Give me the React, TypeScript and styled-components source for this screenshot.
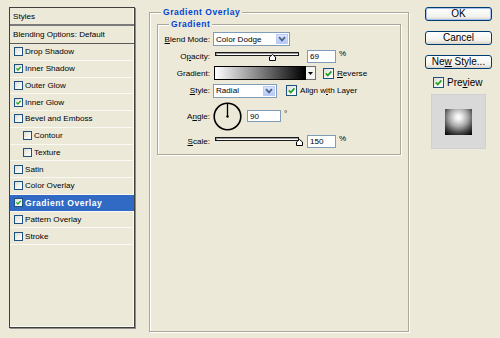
import React from "react";
import styled, { createGlobalStyle } from "styled-components";

const Global = createGlobalStyle`
  * { box-sizing: border-box; }
  html, body { margin: 0; padding: 0; background: #ECE9D8; }
  body {
    width: 500px; height: 338px; overflow: hidden;
    font-family: "Liberation Sans", Arial, sans-serif;
    font-size: 8.1px; color: #000;
  }
`;

const Dialog = styled.div`
  display: flex;
  align-items: flex-start;
  width: 500px;
  height: 338px;
  padding: 7px 0 0 9px;
`;

/* ---------- left styles list ---------- */
const StylesList = styled.div`
  width: 126px;
  height: 321px;
  border: 1px solid #3f3f3f;
  box-shadow: 1px 1px 0 #8c8c8c, inset -1px -1px 0 #fbfaf4;
  display: flex;
  flex-direction: column;
`;

const ListHeader = styled.div`
  height: 18px;
  padding-left: 3px;
  display: flex;
  align-items: center;
  border-bottom: 2px solid #7b7b7b;
`;

const BlendingRow = styled.div`
  height: 18px;
  padding-left: 3px;
  display: flex;
  align-items: center;
  border-bottom: 1px solid #5a5a5a;
`;

const ListItem = styled.div<{ $indent?: boolean; $selected?: boolean }>`
  height: 16.75px;
  flex: none;
  display: flex;
  align-items: center;
  gap: 2px;
  padding-left: ${(p) => (p.$indent ? 13 : 4)}px;
  border-bottom: 1px solid #f9f8f1;
  background: ${(p) => (p.$selected ? "#316AC5" : "transparent")};
  color: ${(p) => (p.$selected ? "#fff" : "#000")};
  font-weight: ${(p) => (p.$selected ? "bold" : "normal")};
  font-size: ${(p) => (p.$selected ? "8.5px" : "8.1px")};
  letter-spacing: ${(p) => (p.$selected ? "0.55px" : "0")};
  white-space: nowrap;
`;

const CheckBox = styled.span<{ $size: number }>`
  flex: none;
  display: inline-flex;
  align-items: center;
  justify-content: center;
  width: ${(p) => p.$size}px;
  height: ${(p) => p.$size}px;
  border: 1px solid #1c5180;
  background: linear-gradient(135deg, #dcdcd7 0%, #f4f4f0 60%, #ffffff 100%);
`;

const Check = ({ checked, size }: { checked?: boolean; size: number }) => (
  <CheckBox $size={size}>
    {checked && (
      <svg width={size - 2} height={size - 2} viewBox="0 0 10 10">
        <path d="M2 4.8 L4.2 7.2 L8.2 2.6" fill="none" stroke="#21A121" strokeWidth="1.9" />
      </svg>
    )}
  </CheckBox>
);

/* ---------- group boxes ---------- */
const Group = styled.fieldset<{ $w: number; $h: number }>`
  margin: 0;
  min-width: 0;
  width: ${(p) => p.$w}px;
  height: ${(p) => p.$h}px;
  border: 1px solid #aca899;
  box-shadow: inset 1px 1px 0 #fff, 1px 1px 0 #fff;
`;

const OuterGroup = styled(Group)`
  margin-left: 14px;
  padding: 1px 7px 0 7px;
`;

const InnerGroup = styled(Group)`
  padding: 2px 0 0 4px;
  display: flex;
  flex-direction: column;
  gap: 3px;
`;

const Legend = styled.legend<{ $offset: number }>`
  padding: 0 2px;
  margin-left: ${(p) => p.$offset}px;
  color: #0046d5;
  font-weight: bold;
  font-size: 8.5px;
  letter-spacing: 0.55px;
  line-height: 11px;
  background: #ece9d8;
`;

const FieldRow = styled.div<{ $h: number }>`
  display: flex;
  align-items: center;
  height: ${(p) => p.$h}px;
  flex: none;
`;

const Label = styled.span`
  width: 48px;
  margin-right: 3px;
  text-align: right;
  white-space: nowrap;
`;

const U = styled.span`
  text-decoration: underline;
`;

const Select = styled.div<{ $w: number }>`
  display: flex;
  align-items: stretch;
  width: ${(p) => p.$w}px;
  height: 14px;
  border: 1px solid #7f9db9;
  background: #fff;
`;

const SelectText = styled.span`
  flex: 1;
  padding-left: 2px;
  display: flex;
  align-items: center;
`;

const SelectButton = styled.span`
  width: 12px;
  margin: 1px;
  border: 1px solid #b9cdf6;
  background: linear-gradient(#d9e5fd, #b5c9f6);
  display: flex;
  align-items: center;
  justify-content: center;
`;

const Chevron = () => (
  <svg width="8" height="6" viewBox="0 0 8 6">
    <path d="M1 1.2 L4 4.4 L7 1.2" fill="none" stroke="#4d6185" strokeWidth="1.8" />
  </svg>
);

const SliderBox = styled.div`
  position: relative;
  width: 84px;
  height: 100%;
  margin-left: 2px;
  padding-top: 3px;
`;

const Track = styled.div`
  height: 4px;
  border: 1px solid #1a1a1a;
  background: #fff;
  box-shadow: inset 1px 1px 0 #9a9a9a;
`;

const Thumb = styled.svg`
  position: absolute;
  top: 5px;
  margin-left: -3.5px;
`;

const Slider = ({ pct }: { pct: number }) => (
  <SliderBox>
    <Track />
    <Thumb width="7" height="7" viewBox="0 0 7 7" style={{ left: `${pct}%` }}>
      <polygon points="0.5,6.5 0.5,3 3.5,0.5 6.5,3 6.5,6.5" fill="#fff" stroke="#000" strokeWidth="1" />
    </Thumb>
  </SliderBox>
);

const TextField = styled.div<{ $w: number; $h: number; $ml: number }>`
  width: ${(p) => p.$w}px;
  height: ${(p) => p.$h}px;
  margin-left: ${(p) => p.$ml}px;
  border: 1px solid #7f9db9;
  background: #fff;
  padding-left: 2px;
  display: flex;
  align-items: center;
`;

const Unit = styled.span`
  margin-left: 3px;
  transform: translateY(-3px);
`;

const GradientBar = styled.div`
  width: 92px;
  height: 14px;
  margin-left: 1px;
  border: 1px solid #000;
  background: linear-gradient(to right, #fff, #000);
`;

const GradientArrow = styled.span`
  width: 10px;
  height: 14px;
  border: 1px solid #6f6f6f;
  border-left: none;
  background: #f4f4f0;
  display: flex;
  align-items: center;
  justify-content: center;
`;

const CheckLabel = styled.span<{ $ml: number }>`
  display: inline-flex;
  align-items: center;
  gap: 3px;
  margin-left: ${(p) => p.$ml}px;
  white-space: nowrap;
`;

const AngleDial = styled.svg`
  flex: none;
`;

/* ---------- right column ---------- */
const SideColumn = styled.div`
  display: flex;
  flex-direction: column;
  width: 67px;
  margin-left: 16px;
`;

const ButtonStack = styled.div`
  display: flex;
  flex-direction: column;
  gap: 10px;
`;

const DlgButton = styled.button<{ $default?: boolean }>`
  height: 14px;
  padding: 0;
  border: 1px solid #003c74;
  border-radius: 3px;
  background: linear-gradient(#ffffff 0%, #f3f3ee 70%, #d8d3c8 100%);
  box-shadow: ${(p) => (p.$default ? "inset 0 0 0 1px #a8c0ee" : "none")};
  font-family: "Liberation Sans", Arial, sans-serif;
  font-size: 10px;
  line-height: 12px;
  color: #000;
`;

const PreviewRow = styled.div`
  display: flex;
  align-items: center;
  gap: 3px;
  height: 11px;
  margin-top: 8px;
  padding-left: 8px;
  font-size: 10px;
`;

const PreviewBox = styled.div`
  width: 55px;
  height: 55px;
  margin: 6px 0 0 6px;
  background: #d9d9d9;
  border: 1px solid #d0d0d0;
  display: flex;
  align-items: center;
  justify-content: center;
`;

const PreviewSwatch = styled.div`
  width: 27px;
  height: 26px;
  background: radial-gradient(circle at 50% 32%, #ffffff 0%, #f2f2f2 12%, #a8a8a8 42%, #474747 70%, #050505 95%);
`;

const items = [
  { label: "Drop Shadow" },
  { label: "Inner Shadow", checked: true },
  { label: "Outer Glow" },
  { label: "Inner Glow", checked: true },
  { label: "Bevel and Emboss" },
  { label: "Contour", indent: true },
  { label: "Texture", indent: true },
  { label: "Satin" },
  { label: "Color Overlay" },
  { label: "Gradient Overlay", checked: true, selected: true },
  { label: "Pattern Overlay" },
  { label: "Stroke" },
];

export default function App() {
  return (
    <>
      <Global />
      <Dialog>
        <StylesList>
          <ListHeader>Styles</ListHeader>
          <BlendingRow>Blending Options: Default</BlendingRow>
          {items.map((it) => (
            <ListItem key={it.label} $indent={it.indent} $selected={it.selected}>
              <Check checked={it.checked} size={9} />
              {it.label}
            </ListItem>
          ))}
        </StylesList>

        <OuterGroup $w={260} $h={325}>
          <Legend $offset={4}>Gradient Overlay</Legend>
          <InnerGroup $w={244} $h={136}>
            <Legend $offset={7}>Gradient</Legend>

            <FieldRow $h={14}>
              <Label>
                <U>B</U>lend Mode:
              </Label>
              <Select $w={77}>
                <SelectText>Color Dodge</SelectText>
                <SelectButton>
                  <Chevron />
                </SelectButton>
              </Select>
            </FieldRow>

            <FieldRow $h={14}>
              <Label>
                O<U>p</U>acity:
              </Label>
              <Slider pct={69} />
              <TextField $w={29} $h={13} $ml={8}>
                69
              </TextField>
              <Unit>%</Unit>
            </FieldRow>

            <FieldRow $h={14}>
              <Label>Gradient:</Label>
              <GradientBar />
              <GradientArrow>
                <svg width="5" height="3" viewBox="0 0 5 3">
                  <polygon points="0,0 5,0 2.5,3" fill="#000" />
                </svg>
              </GradientArrow>
              <CheckLabel $ml={7}>
                <Check checked size={11} />
                <span>
                  <U>R</U>everse
                </span>
              </CheckLabel>
            </FieldRow>

            <FieldRow $h={15}>
              <Label>
                <U>S</U>tyle:
              </Label>
              <Select $w={64}>
                <SelectText>Radial</SelectText>
                <SelectButton>
                  <Chevron />
                </SelectButton>
              </Select>
              <CheckLabel $ml={9}>
                <Check checked size={11} />
                <span>
                  Align w<U>i</U>th Layer
                </span>
              </CheckLabel>
            </FieldRow>

            <FieldRow $h={30}>
              <Label>
                A<U>n</U>gle:
              </Label>
              <AngleDial width="29" height="29" viewBox="0 0 29 29">
                <circle cx="14.5" cy="14.5" r="13.3" fill="none" stroke="#000" strokeWidth="1.6" />
                <line x1="14.5" y1="14.5" x2="14.5" y2="2" stroke="#000" strokeWidth="1.3" />
                <circle cx="14.5" cy="14.5" r="1.2" fill="#000" />
              </AngleDial>
              <TextField $w={34} $h={12} $ml={5}>
                90
              </TextField>
              <Unit>°</Unit>
            </FieldRow>

            <FieldRow $h={14}>
              <Label>
                <U>S</U>cale:
              </Label>
              <Slider pct={100} />
              <TextField $w={29} $h={13} $ml={8}>
                150
              </TextField>
              <Unit>%</Unit>
            </FieldRow>
          </InnerGroup>
        </OuterGroup>

        <SideColumn>
          <ButtonStack>
            <DlgButton $default>OK</DlgButton>
            <DlgButton>Cancel</DlgButton>
            <DlgButton>
              Ne<U>w</U> Style...
            </DlgButton>
          </ButtonStack>
          <PreviewRow>
            <Check checked size={11} />
            <span>
              Pre<U>v</U>iew
            </span>
          </PreviewRow>
          <PreviewBox>
            <PreviewSwatch />
          </PreviewBox>
        </SideColumn>
      </Dialog>
    </>
  );
}
